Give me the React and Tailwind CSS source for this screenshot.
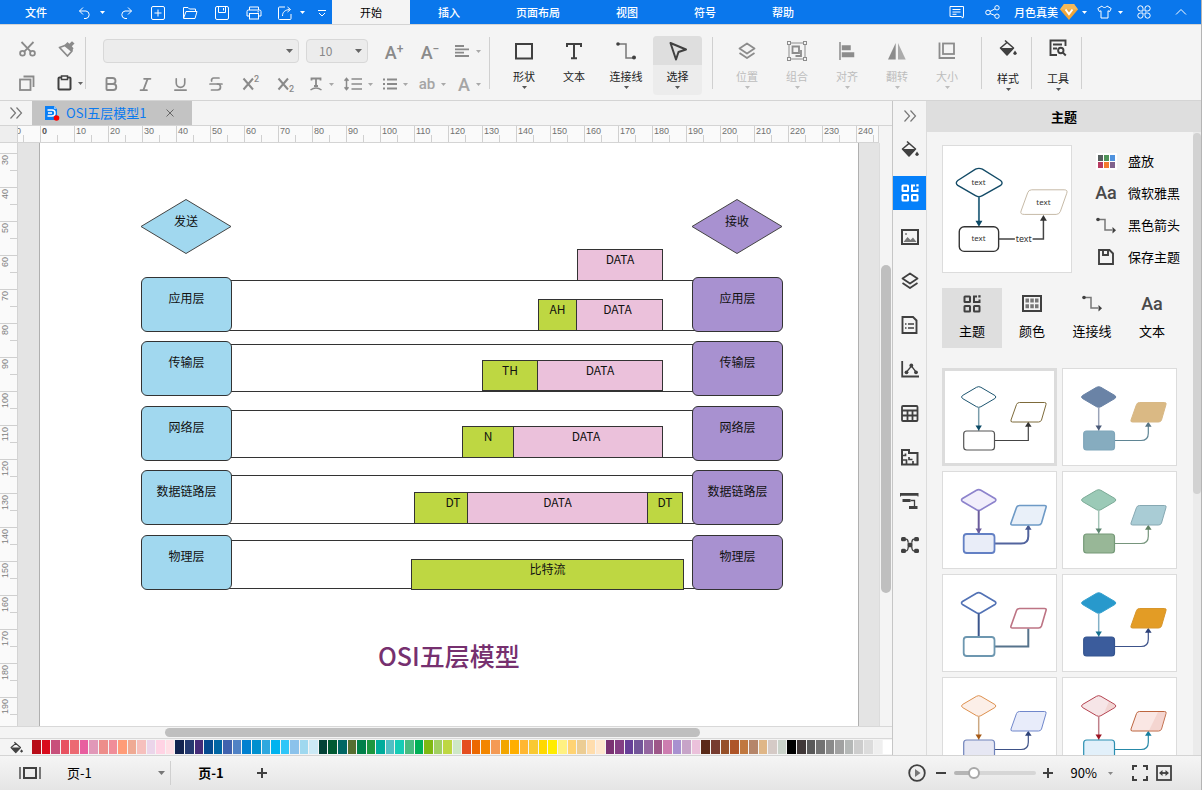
import React from "react";
import { Bold, Italic, Underline, Strikethrough } from "lucide-react";

/* ---------- icon helpers ---------- */

function Svg({ w = 18, h = w, sw = 1.5, className = "", children }) {
  return (
    <svg
      width={w}
      height={h}
      viewBox={`0 0 ${w} ${h}`}
      fill="none"
      stroke="currentColor"
      strokeWidth={sw}
      className={`shrink-0 ${className}`}
      aria-hidden="true"
    >
      {children}
    </svg>
  );
}

function Caret({ className = "" }) {
  return (
    <svg width="5" height="3" viewBox="0 0 5 3" fill="currentColor" className={`shrink-0 ${className}`} aria-hidden="true">
      <path d="M0 0h5L2.5 3z" />
    </svg>
  );
}

function BigCaret({ className = "" }) {
  return (
    <svg width="7" height="4" viewBox="0 0 7 4" fill="currentColor" className={`shrink-0 ${className}`} aria-hidden="true">
      <path d="M0 0h7L3.5 4z" />
    </svg>
  );
}

const DoubleChevron = () => (
  <Svg w={14} h={14} sw={1.2}>
    <path d="M1.5 1.5 6.5 7l-5 5.5M7.5 1.5l5 5.5-5 5.5" />
  </Svg>
);

const UndoIcon = () => (
  <Svg w={14} sw={1}>
    <path d="M5 1.5 1.5 5 5 8.5M1.5 5h6.500a3.800 3.800 0 0 1 0 7.500H6" />
  </Svg>
);
const RedoIcon = () => (
  <Svg w={14} sw={1}>
    <path d="M9 1.5 12.5 5 9 8.5M12.5 5H6a3.800 3.800 0 0 0 0 7.500h2" />
  </Svg>
);
const NewIcon = () => (
  <Svg w={14} sw={1}>
    <rect x="0.5" y="0.5" width="13" height="13" rx="1.5" />
    <path d="M7 3.5v7M3.500 7h7" />
  </Svg>
);
const FolderIcon = () => (
  <Svg w={16} h={14} sw={1}>
    <path d="M1.500 12V1.500h4.500L7.500 3h6v2M1.500 12.500 4 5.500h11l-2 7z" strokeLinejoin="round" />
  </Svg>
);
const SaveIcon = () => (
  <Svg w={14} sw={1}>
    <rect x="0.5" y="0.5" width="13" height="13" rx="1.5" />
    <path d="M3.500.500v6h7v-6M8.500 2v2.500" />
  </Svg>
);
const PrintIcon = () => (
  <Svg w={16} h={14} sw={1}>
    <path d="M3.500 4V1h9v3M3.500 10h-2.500V5.500A1.500 1.500 0 0 1 2.500 4h11A1.500 1.500 0 0 1 15 5.500V10h-2.500" />
    <rect x="3.5" y="7.5" width="9" height="5.5" />
    <path d="M11.500 5.800h1.500" />
  </Svg>
);
const ExportIcon = () => (
  <Svg w={14} sw={1}>
    <path d="M7 1H1.500a1 1 0 0 0-1 1v10.500a1 1 0 0 0 1 1h10.500a1 1 0 0 0 1-1V8M4.500 10c0-4 2.500-6 7-6.500M9.500 1l3 2.500-3 2.500" />
  </Svg>
);
const MoreIcon = () => (
  <Svg w={8} h={8} sw={1}>
    <path d="M0 1.500h8M1 4l3 3 3-3" />
  </Svg>
);
const CommentIcon = () => (
  <Svg w={16} h={14} sw={1}>
    <path d="M1 1.500h13.500v10H14v1.500l-2-1.500H1zM3.500 4.500h8M3.500 7h8M3.500 9.300h4" />
  </Svg>
);
const ShareIcon = () => (
  <Svg w={15} h={14} sw={1}>
    <circle cx="3" cy="7.5" r="2.3" />
    <circle cx="12" cy="2.8" r="2.2" />
    <circle cx="12" cy="11.2" r="2.2" />
    <path d="m5 6.500 5-2.700M5 8.500l5 2" />
  </Svg>
);
const GemIcon = () => (
  <Svg w={18} h={16} sw={2}>
    <path d="M4 0h10l4 5.500L9 16 0 5.500z" fill="#f0a63a" stroke="none" />
    <path d="M4 0h10l4 5.500H0z" fill="#f5b95a" stroke="none" />
    <path d="m5.500 5.500 3.500 4.500 3.500-4.500" stroke="#fff" />
  </Svg>
);
const ShirtIcon = () => (
  <Svg w={15} h={14} sw={1}>
    <path d="M5 1 .8 3.500 2.300 6.500l1.700-.7V13h7V5.800l1.700.7 1.500-3L10 1C9 3 6 3 5 1z" strokeLinejoin="round" />
  </Svg>
);
const CloverIcon = () => (
  <Svg w={14} sw={1}>
    <path d="M6 6H3.500A2.600 2.600 0 1 1 6 3.500zM8 6V3.500A2.600 2.600 0 1 1 10.500 6zM6 8v2.500A2.600 2.600 0 1 1 3.500 8zM8 8h2.500A2.600 2.600 0 1 1 8 10.500z" />
  </Svg>
);

const ScissorsIcon = () => (
  <Svg w={17} h={16} sw={1.8}>
    <circle cx="3.5" cy="12.3" r="2.4" />
    <circle cx="13.5" cy="12.3" r="2.4" />
    <path d="M2.500 1l9 9.300M14.500 1l-9 9.300" />
  </Svg>
);
const BrushIcon = () => (
  <Svg w={17} h={17} sw={1.8}>
    <path d="M1.500 6.500 7 4.500 14 10 9.500 15z" strokeLinejoin="round" />
    <path d="M6.500 4 9.500 1l1.800 1.700L14 .3 16.500 2.500 13.800 5.200l1.700 2L13.500 11z" fill="currentColor" stroke="none" />
  </Svg>
);
const CopyIcon = () => (
  <Svg w={16} h={16} sw={1.8}>
    <rect x="1" y="4.5" width="10.5" height="10.5" />
    <path d="M4.500 1.500h10V12" />
  </Svg>
);
const PasteIcon = () => (
  <Svg w={15} h={16} sw={2}>
    <rect x="1.5" y="2.5" width="12" height="12" rx="1" />
    <rect x="4.5" y="1" width="6" height="3.5" fill="#f4f4f4" strokeWidth="1.5" />
  </Svg>
);
const AlignIcon = () => (
  <Svg w={15} h={12} sw={1.8}>
    <path d="M0 1h9M0 4.300h14M0 7.600h9M0 11h14" />
  </Svg>
);
const PowerIcon = ({ y }) => (
  <Svg w={18} h={18} sw={2}>
    <path d="M1.500 3.500 11 14.500M11 3.500 1.500 14.500" />
    <text x="12" y={y} fill="currentColor" stroke="none" className="font-['Roboto',sans-serif] text-[9px] font-medium">2</text>
  </Svg>
);
const TextEffectIcon = () => (
  <Svg w={14} h={14} sw={1.8}>
    <path d="M2.500 3.500V1.500h9v2M7 1.500V9M5 9h4" />
    <path d="M1.500 13q5.500-4 11 0" strokeWidth="1.5" />
  </Svg>
);
const LineSpacingIcon = () => (
  <Svg w={18} h={14} sw={1.5}>
    <path d="M2.500 1.500v11M.5 3.800 2.500 1.500l2 2.300M.5 10.200l2 2.300 2-2.300M7.500 2H18M7.500 7H18M7.500 12H18" />
  </Svg>
);
const BulletsIcon = () => (
  <Svg w={14} h={12} sw={1.8}>
    <path d="M0 1.500h2M4 1.500h10M0 6h2M4 6h10M0 10.500h2M4 10.500h10" />
  </Svg>
);

const RectIcon = () => (
  <Svg w={20} h={18} sw={2}>
    <rect x="2" y="2" width="16" height="14.5" />
  </Svg>
);
const TIcon = () => (
  <Svg w={18} h={18} sw={2}>
    <path d="M2 5V2h14v3M9 2v14.500M6 16.300h6" />
  </Svg>
);
const ConnectorIcon = () => (
  <Svg w={20} h={18} sw={1.5}>
    <path d="M2 2h8v14h8" className="stroke-[#777]" />
    <circle cx="2" cy="2" r="1.8" fill="currentColor" stroke="none" />
    <circle cx="18" cy="15.5" r="2" fill="currentColor" stroke="none" />
  </Svg>
);
const ArrowConnectorIcon = () => (
  <Svg w={20} h={17} sw={1.5}>
    <path d="M2 2.500h7v10.500h7" className="stroke-[#777]" />
    <circle cx="2" cy="2.5" r="1.8" fill="currentColor" stroke="none" />
    <path d="M16.500 10v6.500l3.500-3.200z" fill="currentColor" stroke="none" />
  </Svg>
);
const PointerIcon = () => (
  <Svg w={20} h={20} sw={2}>
    <path d="M2.500 2 18 8.500l-7.500 2.500L8 18.500z" strokeLinejoin="round" />
  </Svg>
);
const LayersIcon = () => (
  <Svg w={20} h={18} sw={1.8}>
    <path d="m10 1.500 7.500 5-7.500 5-7.500-5zM2.500 11l7.500 5 7.500-5" strokeLinejoin="round" />
  </Svg>
);
const GroupIcon = () => (
  <Svg w={20} h={20} sw={1}>
    <rect x="2" y="2" width="16" height="16" />
    <g fill="#f4f4f4">
      <rect x=".5" y=".5" width="3" height="3" />
      <rect x="16.5" y=".5" width="3" height="3" />
      <rect x=".5" y="16.5" width="3" height="3" />
      <rect x="16.5" y="16.5" width="3" height="3" />
    </g>
    <path d="M5.500 5.500h6.500v6.500H5.500zM14 9v6H8.500" strokeWidth="1.8" />
  </Svg>
);
const AlignLeftIcon = () => (
  <Svg w={16} h={18} sw={1.5}>
    <path d="M1 0v18" />
    <path d="M3.500 4h7.500v3.500H3.500zM3.500 11H14.500v3.500H3.500z" fill="currentColor" />
  </Svg>
);
const FlipIcon = () => (
  <Svg w={20} h={18}>
    <path d="M8.700 1v16.500H1z" fill="currentColor" stroke="none" />
    <path d="M11 1v16.500h7.700z" fill="currentColor" stroke="none" opacity=".7" />
  </Svg>
);
const SizeIcon = () => (
  <Svg w={18} h={18} sw={1.8}>
    <rect x="5" y="1.5" width="11" height="10.5" />
    <path d="M1.500.5v15.500H17" />
  </Svg>
);
const BucketIcon = ({ w = 18 }) => (
  <svg width={w} height={w} viewBox="0 0 18 18" fill="none" stroke="currentColor" strokeWidth="1.6" className="shrink-0" aria-hidden="true">
    <path d="M6 1.500 14.500 9 8 16 1.500 9 8.500 3" strokeLinejoin="round" />
    <path d="M1.500 9h13L8 16z" fill="currentColor" stroke="none" />
    <path d="M16 11.500q3 4 0 4t0-4z" fill="currentColor" stroke="none" />
    <circle cx="16" cy="14.3" r="1.5" fill="currentColor" stroke="none" />
  </svg>
);
const ToolsIcon = () => (
  <Svg w={18} h={18} sw={1.9}>
    <path d="M16.500 7V1.500h-15V16H8M4 5.500h9M4 9.500h4" />
    <circle cx="11.8" cy="11.5" r="2.7" />
    <path d="m13.800 13.500 3 3" />
  </Svg>
);

/* side strip icons */
const ThemeIcon = () => (
  <Svg w={18} h={18} sw={2}>
    <rect x="1.5" y="1.5" width="5.5" height="5.5" rx=".5" />
    <path d="M14 1.500h-3v5.500h5.500V4.500" />
    <path d="M15.300.2h2.300v2.300h-2.300z" fill="currentColor" stroke="none" />
    <rect x="1.5" y="11" width="5.5" height="5.5" rx=".5" />
    <rect x="11" y="11" width="5.5" height="5.5" rx=".5" />
  </Svg>
);
const ImageIcon = () => (
  <Svg w={18} h={16} sw={2}>
    <rect x="1" y="1" width="16" height="14" />
    <path d="m2.500 13 4-5 3 3 2.500-2.500 3.500 4.500z" fill="#777" stroke="none" />
    <circle cx="5" cy="5" r="1" fill="#777" stroke="none" />
  </Svg>
);
const PageIcon = () => (
  <Svg w={17} h={18} sw={1.9}>
    <path d="M1.500 1H12l3.500 3.500V17h-14z" />
    <path d="M4 8h1.500M7 8h6M4 12h1.500M7 12h6" strokeWidth="1.5" />
  </Svg>
);
const ChartIcon = () => (
  <Svg w={18} h={17} sw={1.3}>
    <path d="M1.200 0v15.500H18" strokeWidth="1.8" />
    <path d="m5.500 11 5-6 4.500 6" />
    <g fill="currentColor" stroke="none">
      <circle cx="5.5" cy="11.3" r="1.9" />
      <circle cx="10.3" cy="4.5" r="1.9" />
      <circle cx="15" cy="11.3" r="1.9" />
    </g>
  </Svg>
);
const TableIcon = () => (
  <Svg w={18} h={17} sw={1.8}>
    <rect x="1" y="1" width="15.5" height="15" rx="1" />
    <path d="M1 5.500h15.500M1 10.500h15.500M6.500 5.500V16M11.500 5.500V16" />
  </Svg>
);
const PlanIcon = () => (
  <Svg w={18} h={17} sw={2}>
    <path d="M1 1h7v3h8.500v11.500H1z" />
    <path d="M1 6.500h3.500v-2M1 11h4.500v4M8 8v2.500h3.500M12 15.500V12" strokeWidth="1.7" />
  </Svg>
);
const GanttIcon = () => (
  <Svg w={19} h={16} sw={1.3}>
    <path d="M0 0h18.500v3.500h-1V2.800H1v.7H0zM2.500 6h8v3h-8zM9 13h8.500v3H9z" fill="currentColor" stroke="none" />
    <path d="M10.500 7.500h4V13" />
  </Svg>
);
const MindIcon = () => (
  <Svg w={18} h={16} sw={1.3}>
    <g fill="currentColor" stroke="none">
      <rect x="0" y="0" width="5" height="4.3" rx="1.5" />
      <rect x="13" y="0" width="5" height="4.3" rx="1.5" />
      <rect x="0" y="11.7" width="5" height="4.3" rx="1.5" />
      <rect x="13" y="11.7" width="5" height="4.3" rx="1.5" />
      <rect x="6.5" y="5.8" width="5" height="4.4" rx="1" />
    </g>
    <path d="M5 2.200q2 0 2.200 3.500M13 2.200q-2 0-2.200 3.500M5 13.800q2 0 2.200-3.800M13 13.800q-2 0-2.200-3.800" />
  </Svg>
);
const PaletteGridIcon = () => (
  <Svg w={20} h={17} sw={2}>
    <rect x="1" y="1" width="18" height="15" />
    <path
      d="M3.500 3.500h3.500v4H3.500zM8.300 3.500h3.500v4H8.300zM13 3.500h3.500v4H13zM3.500 9.200h3.500v4H3.500zM8.300 9.200h3.500v4H8.300zM13 9.200h3.500v4H13z"
      fill="#777"
      stroke="none"
    />
  </Svg>
);
const DiskIcon = () => (
  <Svg w={16} h={16} sw={1.9}>
    <path d="M1 1h10.500L15 4.500V15H1zM5 1v5h5V1" />
  </Svg>
);
const SixColorsIcon = () => (
  <svg width="21" height="17" viewBox="0 0 21 17" className="shrink-0" aria-hidden="true">
    <path d="M0 0h21v17H0z" fill="#fff" />
    <path d="M2 2h5v6H2z" fill="#555e5e" />
    <path d="M8 2h5v6H8z" fill="#4f9358" />
    <path d="M14 2h5v6h-5z" fill="#4f92de" />
    <path d="M2 9h5v6H2z" fill="#b73b62" />
    <path d="M8 9h5v6H8z" fill="#f47b2e" />
    <path d="M14 9h5v6h-5z" fill="#80628d" />
  </svg>
);
const AaIcon = () => <span className="font-['Roboto',sans-serif] text-[18px] leading-5 font-medium text-[#4a4a4a]">Aa</span>;

/* ---------- top menu bar ---------- */

function QuickButton({ label, width = "w-8", caret, children }) {
  return (
    <button aria-label={label} className={`flex h-full items-center justify-center gap-2 pt-px ${width}`}>
      {children}
      {caret && <Caret />}
    </button>
  );
}

function MenuBar() {
  return (
    <header className="flex h-6 shrink-0 items-stretch bg-[#0a77ec] text-[11px] font-medium text-white">
      <button className="w-18">文件</button>
      <QuickButton label="撤销" width="w-[38px]" caret><UndoIcon /></QuickButton>
      <QuickButton label="恢复"><RedoIcon /></QuickButton>
      <QuickButton label="新建"><NewIcon /></QuickButton>
      <QuickButton label="打开"><FolderIcon /></QuickButton>
      <QuickButton label="保存"><SaveIcon /></QuickButton>
      <QuickButton label="打印"><PrintIcon /></QuickButton>
      <QuickButton label="导出" width="w-[42px]" caret><ExportIcon /></QuickButton>
      <QuickButton label="更多" width="w-5"><MoreIcon /></QuickButton>
      <nav className="flex">
        <button className="bg-[#f4f4f4] px-7 font-normal text-black">开始</button>
        {["插入", "页面布局", "视图", "符号", "帮助"].map((t) => (
          <button key={t} className="px-7">{t}</button>
        ))}
      </nav>
      <div className="ml-auto flex items-center pr-[14px]">
        <button aria-label="评论" className="mr-5"><CommentIcon /></button>
        <button aria-label="分享" className="mr-3.5"><ShareIcon /></button>
        <button className="mr-2.5 flex items-center gap-0.5">
          月色真美
          <GemIcon />
          <Caret className="ml-0.5" />
        </button>
        <button aria-label="皮肤" className="mr-3.5 flex items-center gap-1.5"><ShirtIcon /><Caret /></button>
        <button aria-label="应用" className="mr-6"><CloverIcon /></button>
        <button aria-label="收起">
          <Svg w={12} h={8} sw={1}><path d="m1 6.500 5-5 5 5" /></Svg>
        </button>
      </div>
    </header>
  );
}

/* ---------- ribbon ---------- */

const Sep = () => <div className="mt-3 h-[52px] w-px shrink-0 bg-[#d0d0d0]" />;

function SmallTool({ label, width = "w-[35px]", caret, children }) {
  return (
    <button aria-label={label} className={`flex h-6 items-center justify-center gap-1.5 ${width}`}>
      {children}
      {caret && <Caret className="text-[#a8a8a8]" />}
    </button>
  );
}

function BigTool({ label, width = "w-[50px]", caret = true, tall, disabled, active, children }) {
  return (
    <button
      disabled={disabled}
      className={`flex flex-col items-center rounded-sm ${tall ? "mt-2 h-16 gap-[5px] pl-[3px]" : "mt-[11px] h-[59px]"} ${width} ${
        active ? "bg-[#ececec]" : ""
      } ${disabled ? "text-[#bdbdbd]" : "text-[#222]"}`}
    >
      <span
        className={`flex h-[29px] w-full items-center justify-center rounded-t-sm ${active ? "bg-[#dedede]" : ""} ${
          disabled ? "text-[#8c8c8c]" : "text-[#404040]"
        }`}
      >
        {children}
      </span>
      <span className="flex flex-col items-center">
        <span className="h-5 text-[11px] leading-[22px]">{label}</span>
        {caret && <Caret className={disabled ? "mt-px" : "mt-px text-[#555]"} />}
      </span>
    </button>
  );
}

function Combo({ label, value, width }) {
  return (
    <div className={`grid h-6 ${width}`}>
      <select
        aria-label={label}
        className="appearance-none rounded-sm border border-[#d8d8d8] bg-[#ececec] pl-3 text-[12px] text-[#888] outline-none [grid-area:1/1]"
        defaultValue={value}
      >
        <option>{value}</option>
      </select>
      <BigCaret className="pointer-events-none mr-1.5 self-center justify-self-end text-[#666] [grid-area:1/1]" />
    </div>
  );
}

function FontStep({ label, sign }) {
  return (
    <button aria-label={label} className="flex h-6 w-9 items-start justify-center pt-0.5 font-['Roboto',sans-serif] text-[18px] leading-6 font-medium">
      A<span className="text-[12px] leading-4">{sign}</span>
    </button>
  );
}

function Ribbon() {
  return (
    <div className="flex h-[77px] shrink-0 border-y border-[#d4d4d4] bg-[#f4f4f4] text-[#8a8a8a]">
      <div className="grid grid-cols-[40px_38px] grid-rows-[34px_34px] items-center justify-items-center pt-[7px] pl-[7px]">
        <button aria-label="剪切"><ScissorsIcon /></button>
        <button aria-label="格式刷"><BrushIcon /></button>
        <button aria-label="复制"><CopyIcon /></button>
        <button aria-label="粘贴" className="flex items-center gap-1.5 pl-2 text-[#404040]"><PasteIcon /><Caret className="text-[#666]" /></button>
      </div>
      <Sep />
      <div className="flex flex-col gap-[9px] pt-[14px]">
        <div className="flex h-6 items-center pl-[17px]">
          <Combo label="字体" value="" width="w-[196px]" />
          <div className="w-[7px]" />
          <Combo label="字号" value="10" width="w-[62px]" />
          <div className="w-2" />
          <FontStep label="增大字号" sign="+" />
          <FontStep label="减小字号" sign="−" />
          <SmallTool label="段落对齐" width="w-10" caret><AlignIcon /></SmallTool>
        </div>
        <div className="flex h-6 items-center pl-[7px]">
          <SmallTool label="加粗"><Bold size={18} strokeWidth={2.5} /></SmallTool>
          <SmallTool label="斜体"><Italic size={17} strokeWidth={2.5} /></SmallTool>
          <SmallTool label="下划线"><Underline size={17} strokeWidth={2.3} /></SmallTool>
          <SmallTool label="删除线"><Strikethrough size={18} strokeWidth={2.3} /></SmallTool>
          <SmallTool label="上标"><PowerIcon y={7} /></SmallTool>
          <SmallTool label="下标"><PowerIcon y={17} /></SmallTool>
          <SmallTool label="文字效果" width="w-[37px]" caret><TextEffectIcon /></SmallTool>
          <SmallTool label="行距" width="w-[37px]" caret><LineSpacingIcon /></SmallTool>
          <SmallTool label="项目符号" width="w-[37px]" caret><BulletsIcon /></SmallTool>
          <SmallTool label="字符底纹" width="w-[37px]" caret>
            <span className="font-['Roboto',sans-serif] text-[15px] font-medium text-[#a5a5a5]">ab</span>
          </SmallTool>
          <SmallTool label="字体颜色" width="w-[37px]" caret>
            <span className="font-['Roboto',sans-serif] text-[18px] font-medium text-[#a5a5a5]">A</span>
          </SmallTool>
        </div>
      </div>
      <div className="w-px" />
      <Sep />
      <div className="flex pr-[10px] pl-[9px]">
        <BigTool label="形状"><RectIcon /></BigTool>
        <BigTool label="文本" caret={false}><TIcon /></BigTool>
        <BigTool label="连接线" width="w-[54px]"><ConnectorIcon /></BigTool>
        <BigTool label="选择" width="w-[49px]" active><PointerIcon /></BigTool>
      </div>
      <Sep />
      <div className="flex px-[9px]">
        <BigTool label="位置" disabled><LayersIcon /></BigTool>
        <BigTool label="组合" disabled><GroupIcon /></BigTool>
        <BigTool label="对齐" disabled><AlignLeftIcon /></BigTool>
        <BigTool label="翻转" disabled><FlipIcon /></BigTool>
        <BigTool label="大小" disabled><SizeIcon /></BigTool>
      </div>
      <Sep />
      <BigTool label="样式" width="w-[49px]" tall><BucketIcon /></BigTool>
      <Sep />
      <BigTool label="工具" width="w-[49px]" tall><ToolsIcon /></BigTool>
      <Sep />
    </div>
  );
}

/* ---------- document area ---------- */

function DocTabs() {
  return (
    <div className="flex h-[25px] shrink-0 border-b border-[#d4d4d4]">
      <button aria-label="展开" className="flex w-8 items-center justify-center text-[#777]"><DoubleChevron /></button>
      <div className="flex w-40 items-center bg-[#c3c3c3] pl-3">
        <svg width="16" height="16" viewBox="0 0 16 16" className="shrink-0" aria-hidden="true">
          <path d="M1 1h9l3 3v11H1z" fill="#0a7ff5" />
          <path d="M10 1l3 3h-3z" fill="#8ec4fb" />
          <path d="M3.500 5h4.500a2.800 2.800 0 0 1 0 6H3.500M4 8h4" stroke="#fff" strokeWidth="1.5" fill="none" />
          <circle cx="12.5" cy="13" r="2.8" fill="#f00" />
        </svg>
        <span className="ml-1.5 text-[13px] text-[#0a7af0]">OSI五层模型1</span>
        <button aria-label="关闭" className="ml-5 text-[#666]">
          <Svg w={8} h={8} sw={1}><path d="M.5.500l7 7M7.500.500l-7 7" /></Svg>
        </button>
      </div>
    </div>
  );
}

const hMarks = Array.from({ length: 26 }, (_, i) => i * 10 - 10);
const vMarks = Array.from({ length: 17 }, (_, i) => 30 + i * 10);

function HorizontalRuler() {
  return (
    <div className="mr-[13px] flex h-[17px] shrink-0 overflow-hidden border-r border-b border-[#d4d4d4] bg-[#fafafa]">
      <div className="relative z-10 w-[18px] shrink-0 border-r border-[#d4d4d4] bg-[#eee]" />
      <div className="-ml-3 flex">
        {hMarks.map((m) => (
          <div key={m} className="flex w-[34px] shrink-0 items-end">
            <div
              className={`h-full w-[17px] border-l border-[#d0d0d0] pl-px font-['Liberation_Sans',sans-serif] text-[9px] leading-[11px] whitespace-nowrap ${
                m === 0 ? "font-bold text-[#555]" : "text-[#707070]"
              }`}
            >
              {m}
            </div>
            <div className="h-[7px] w-[17px] border-l border-[#d0d0d0]" />
          </div>
        ))}
      </div>
    </div>
  );
}

function VerticalRuler() {
  return (
    <div className="w-[18px] shrink-0 overflow-hidden border-r border-[#d4d4d4] bg-[#fafafa] pt-[10px]">
      {vMarks.map((m) => (
        <div key={m} className="flex h-[34px] flex-col items-end">
          <div className="h-[17px] w-full border-t border-[#d0d0d0] pt-px font-['Liberation_Sans',sans-serif] text-[9px] leading-[11px] whitespace-nowrap text-[#808080]">
            <span className="inline-block rotate-180 [writing-mode:vertical-rl]">{m}</span>
          </div>
          <div className="h-[17px] w-[7px] border-t border-[#d0d0d0]" />
        </div>
      ))}
    </div>
  );
}

const layers = [
  { name: "应用层", top: 134, bandTop: 137, bandH: 51 },
  { name: "传输层", top: 198, bandTop: 201, bandH: 48 },
  { name: "网络层", top: 263, bandTop: 267, bandH: 48 },
  { name: "数据链路层", top: 327, bandTop: 332, bandH: 49 },
  { name: "物理层", top: 392, bandTop: 397, bandH: 49 },
];

const packets = [
  { t: "DATA", x: 537, y: 106, w: 86, h: 32, c: "bg-[#ebc1db]" },
  { t: "AH", x: 498, y: 156, w: 39, h: 32, c: "bg-[#bed742]" },
  { t: "DATA", x: 536, y: 156, w: 87, h: 32, c: "bg-[#ebc1db] pr-1" },
  { t: "TH", x: 442, y: 217, w: 56, h: 31, c: "bg-[#bed742]" },
  { t: "DATA", x: 497, y: 217, w: 126, h: 31, c: "bg-[#ebc1db]" },
  { t: "N", x: 422, y: 283, w: 52, h: 32, c: "bg-[#bed742]" },
  { t: "DATA", x: 473, y: 283, w: 150, h: 32, c: "bg-[#ebc1db] pr-1" },
  { t: "DT", x: 374, y: 349, w: 54, h: 32, c: "bg-[#bed742] pl-6" },
  { t: "DATA", x: 427, y: 349, w: 181, h: 32, c: "bg-[#ebc1db]" },
  { t: "DT", x: 607, y: 349, w: 36, h: 32, c: "bg-[#bed742]" },
  { t: "比特流", x: 371, y: 416, w: 273, h: 31, c: "bg-[#bed742]" },
];

function Diamond({ x, fill, text }) {
  return (
    <div className="absolute grid" style={{ left: x, top: 55 }}>
      <svg width="92" height="57" viewBox="0 0 92 57" className="[grid-area:1/1]" aria-hidden="true">
        <path d="M46 1.500 91 28.500 46 55.500 1 28.500z" fill={fill} stroke="#444" />
      </svg>
      <span className="mt-[13px] text-center leading-5 [grid-area:1/1]">{text}</span>
    </div>
  );
}

function Diagram() {
  return (
    <div className="relative h-full text-[12px] text-[#111]">
      <Diamond x={100} fill="#a1d8ef" text="发送" />
      <Diamond x={651} fill="#a891d0" text="接收" />
      {layers.map((l) => (
        <div key={l.name}>
          <div className="absolute border-y border-[#333]" style={{ left: 146, top: l.bandTop, width: 551, height: l.bandH }} />
          <div className="absolute rounded-md border border-[#333] bg-[#a1d8ef] pt-[10px] text-center leading-5" style={{ left: 101, top: l.top, width: 91, height: 55 }}>
            {l.name}
          </div>
          <div className="absolute rounded-md border border-[#333] bg-[#a891d0] pt-[10px] text-center leading-5" style={{ left: 652, top: l.top, width: 91, height: 55 }}>
            {l.name}
          </div>
        </div>
      ))}
      {packets.map((p) => (
        <div key={p.x + "-" + p.y} className={`absolute border border-[#333] text-center leading-[18px] ${p.c}`} style={{ left: p.x, top: p.y, width: p.w, height: p.h }}>
          {p.t}
        </div>
      ))}
      <h1 className="absolute top-[494px] left-[338px] text-[25px] leading-9 font-medium whitespace-nowrap text-[#76306f]">OSI五层模型</h1>
    </div>
  );
}

const swatches = (
  "b80d18 d90b1c c8507b e85261 ec6a72 e85e9f e198b8 ed8d8a f08d99 ff9c78 efaa94 f6c0bd ebd5ea ffd3e4 ffdfe6 " +
  "13234f 24396f 452c78 054a8f 0066a4 4062ae 5082c5 0080d0 0090cf 2ea8df 00b3ef 2fc6f8 8bc2eb 9fd8ef cce9f5 " +
  "024236 005a32 006663 566e30 00804a 1d973f 00ac9c 52bfc3 16ccb5 48bb80 00b057 80b913 a1d062 bed742 cee7c7 " +
  "e54e20 ec6800 f38600 f49a55 f2a600 ffaf00 ffb732 f9c932 ffd800 ffec00 fff182 ffd373 eccd94 ffddad ffe8cf " +
  "7a3273 843e84 673f98 735599 9566a0 9e5789 cd7db0 a891d0 c7a4c8 ebc1db 5a2a18 773b2f 965029 ae5428 c07840 " +
  "b5856a dfb687 d5cac6 cad3ca 000000 403838 595959 727272 8a8a8a a1a1a1 b5b8b7 cdcdcd dcdcdc efefef ffffff"
).split(" ");

function Palette() {
  return (
    <div className="flex h-[17px] shrink-0 items-center border-t border-[#d8d8d8] text-[#404040]">
      <button aria-label="填充" className="flex w-8 justify-center"><BucketIcon w={13} /></button>
      <div className="flex h-[14px] flex-1 gap-px">
        {swatches.map((c) => (
          <button key={c} aria-label={"#" + c} className="min-w-0 flex-1" style={{ backgroundColor: "#" + c }} />
        ))}
      </div>
    </div>
  );
}

function Workspace() {
  return (
    <main className="flex min-w-0 flex-1 flex-col border-r border-[#c6c6c6]">
      <DocTabs />
      <HorizontalRuler />
      <div className="flex min-h-0 flex-1">
        <VerticalRuler />
        <div className="min-w-0 flex-1 overflow-hidden bg-[#e4e4e4] pr-5 pl-[21px]">
          <div className="h-full border-x border-[#b0b0b0] bg-white"><Diagram /></div>
        </div>
        <div className="flex w-[13px] shrink-0 flex-col items-center border-l border-[#dcdcdc]">
          <div className="grow-122 basis-0" />
          <div className="w-[10px] grow-327 basis-0 rounded-full bg-[#bfbfbf]" />
          <div className="grow-133 basis-0" />
        </div>
      </div>
      <div className="flex h-3 shrink-0 items-center border-t border-[#d8d8d8]">
        <div className="grow-165 basis-0" />
        <div className="h-[9px] grow-535 basis-0 rounded-full bg-[#bfbfbf]" />
        <div className="grow-192 basis-0" />
      </div>
      <Palette />
    </main>
  );
}

/* ---------- right side ---------- */

function SideStrip() {
  const items = [
    ["填充", BucketIcon],
    ["主题", ThemeIcon],
    ["图片", ImageIcon],
    ["图层", LayersIcon],
    ["页面", PageIcon],
    ["图表", ChartIcon],
    ["表格", TableIcon],
    ["平面图", PlanIcon],
    ["甘特图", GanttIcon],
    ["思维导图", MindIcon],
  ];
  return (
    <aside className="flex w-[34px] shrink-0 flex-col border-r border-[#dcdcdc] text-[#404040]">
      <button aria-label="收起面板" className="flex h-[26px] items-center justify-center pt-1 text-[#777]"><DoubleChevron /></button>
      {items.map(([label, I]) => (
        <div key={label} className="py-[5px]">
          <button aria-label={label} className={`flex h-[34px] w-full items-center justify-center ${label === "主题" ? "bg-[#0580fa] text-white" : ""}`}>
            <I />
          </button>
        </div>
      ))}
    </aside>
  );
}

const DIAMOND = "M34.500 19.300q2.200-1.300 4.400 0l14 8.200q2 1.500 0 3l-14 8.200q-2.200 1.300-4.400 0l-14-8.200q-2-1.500 0-3z";
const PARA = "M77.500 34.500h25q2.200 0 1.500 2l-4.500 15.500q-.7 2-3 2h-26q-2.200 0-1.500-2l5.500-15.500q.8-2 3-2z";

function ThemeThumb({ t }) {
  const sw = t.sw || 1;
  return (
    <svg width="113" height="96" viewBox="1 1 113 96" fill="none" className="block" aria-hidden="true">
      <path d={DIAMOND} fill={t.d[0]} stroke={t.d[1]} strokeWidth={sw} />
      <path d="M36.700 39.500V63" stroke={t.down[0]} strokeWidth={t.sw ? 2 : 1.5} />
      {t.down[1] && <path d="M33.500 57.500h6.400l-3.200 5z" fill={t.down[1]} />}
      <path d={t.round ? "M52.700 72.500H79q7.300 0 7.300-7.300V55" : "M52.700 72.500h33.600V54.500"} stroke={t.side} strokeWidth={t.sw ? 2 : 1.2} />
      {!t.noArrow && <path d="M83 58.800h6.600l-3.300-5z" fill={t.head} />}
      <rect x="21.7" y="63" width="30.8" height="19" rx="3" fill={t.r[0]} stroke={t.r[1]} strokeWidth={sw + 0.2} />
      <path d={PARA} fill={t.p[0]} stroke={t.p[1]} strokeWidth={sw} />
      {t.shine && (
        <g fill={t.shine}>
          <path d="M47 24.500 52.700 28q1.500 1 0 2L42 36z" opacity=".35" />
          <path d="M96 35h6.500q2 0 1.500 1.500L99.500 52q-.7 1.500-3 1.500H87z" opacity=".35" />
        </g>
      )}
    </svg>
  );
}

const themes = [
  { d: ["#fff", "#1d5570"], down: ["#7a9dab", "#0c4a66"], r: ["#fff", "#555"], side: "#444", head: "#333", p: ["#fff", "#7d6a3a"] },
  { d: ["#6a83a6", "#6a83a6"], down: ["#9aa3b8", "#4a5a78"], r: ["#86acbf", "#7fa6ba"], side: "#5f8594", head: "#587584", p: ["#dab984", "#d8b885"], round: true },
  { d: ["#f1eefb", "#8d83cc"], down: ["#6a5c9c", "#6a5c9c"], r: ["#e9edf8", "#6380c4"], side: "#52649e", head: "#46578f", p: ["#e9f0f9", "#6e9ac6"], round: true, sw: 1.6 },
  { d: ["#9bcab7", "#7cab97"], down: ["#a4c4b7", "#5d8671"], r: ["#98b797", "#769a78"], side: "#76957c", head: "#5f8163", p: ["#a9ccd5", "#86a8b2"], round: true },
  { d: ["#fff", "#5272b5"], down: ["#3a558c", null], r: ["#fff", "#6d97b0"], side: "#56738c", head: null, noArrow: true, p: ["#fff", "#bd7484"], sw: 1.6 },
  { d: ["#2899cc", "#38a2cf"], down: ["#83b1c7", "#15708f"], r: ["#3b5c9c", "#34548f"], side: "#3c528a", head: "#2c4178", p: ["#e39c25", "#d8962c"], round: true },
  { d: ["#fcefe8", "#de914f"], down: ["#cca882", "#a65a17"], r: ["#e6e7f3", "#7084bb"], side: "#3d5187", head: "#2e4278", p: ["#e8ecfa", "#7087cb"], round: true },
  { d: ["#f6e5e7", "#b54350"], down: ["#c0808a", "#9c1423"], r: ["#e2f0fa", "#2b8fb1"], side: "#2689a8", head: "#177e9f", p: ["#fae7e4", "#bd653f"], round: true, shine: "#e8b4ac" },
];

function ThemePreview() {
  return (
    <svg width="130" height="128" viewBox="0 0 130 128" fill="none" className="shrink-0 border border-[#dcdcdc] bg-white font-['Noto_Sans',sans-serif] text-[8px]" role="img" aria-label="主题预览">
      <path d="M33 23.500q3.500-1.500 7 0L58.500 35q3 2.500 0 5L40 50.500q-3.500 2-7 0L15 40q-3-2.500 0-5z" stroke="#124a66" strokeWidth="1.4" />
      <path d="M36.500 51.500V78" stroke="#3d7189" strokeWidth="2" />
      <path d="M33 76h7l-3.500 6z" fill="#0c4a66" />
      <rect x="16.5" y="82" width="40" height="25" rx="5" stroke="#333" strokeWidth="1.4" />
      <path d="M56.500 94.500H102V75" stroke="#444" strokeWidth="1.5" />
      <path d="M98.500 76h7l-3.500-6z" fill="#333" />
      <path d="M90 44.500h33q4 0 2.700 3.500l-6.500 18.500q-1.200 3-4.200 3H82.500q-4.500 0-3.200-3.500l6.700-18.500q1-3 4-3z" stroke="#c5b9a6" />
      <rect x="73" y="90" width="18" height="9" fill="#fff" />
      <g fill="#333" textAnchor="middle">
        <text x="36" y="39.5">text</text>
        <text x="36" y="97">text</text>
        <text x="102" y="60">text</text>
        <text x="82" y="97.5" className="text-[9px]">text</text>
      </g>
    </svg>
  );
}

function ThemePanel() {
  const options = [
    ["盛放", SixColorsIcon],
    ["微软雅黑", AaIcon],
    ["黑色箭头", ArrowConnectorIcon],
    ["保存主题", DiskIcon],
  ];
  const tabs = [
    ["主题", ThemeIcon],
    ["颜色", PaletteGridIcon],
    ["连接线", ArrowConnectorIcon],
    ["文本", AaIcon],
  ];
  return (
    <aside className="flex w-[274px] shrink-0 flex-col text-[13px] text-black">
      <h2 className="flex h-[31px] shrink-0 items-center justify-center bg-[#dedede] font-bold">主题</h2>
      <div className="flex min-h-0 flex-1">
        <div className="min-w-0 flex-1 overflow-hidden pt-[13px] pl-[15px]">
          <div className="flex">
            <ThemePreview />
            <div className="flex flex-col">
              {options.map(([label, I]) => (
                <button key={label} className="flex h-8 items-center text-left text-[#404040]">
                  <span className="mr-0.5 ml-[14px] flex w-10 justify-center"><I /></span>
                  <span className="text-black">{label}</span>
                </button>
              ))}
            </div>
          </div>
          <div className="mt-[15px] flex" role="tablist">
            {tabs.map(([label, I], i) => (
              <button key={label} role="tab" aria-selected={i === 0} className={`flex h-15 w-[60px] flex-col items-center ${i === 0 ? "bg-[#dedede]" : ""}`}>
                <span className="flex h-[31px] items-center text-[#404040]"><I /></span>
                <span className="leading-6">{label}</span>
              </button>
            ))}
          </div>
          <div className="mt-5 grid grid-cols-[115px_115px] gap-[5px]">
            {themes.map((t, i) => (
              <button key={i} aria-label={"主题 " + (i + 1)} className={`h-[98px] overflow-hidden border border-[#dcdcdc] bg-white ${i === 0 ? "inset-ring-2 inset-ring-[#dcdcdc]" : ""}`}>
                <ThemeThumb t={t} />
              </button>
            ))}
          </div>
        </div>
        <div className="w-2 shrink-0 bg-[#ebebeb] pt-px">
          <div className="h-[58%] rounded-full bg-[#d2d2d2]" />
        </div>
      </div>
    </aside>
  );
}

/* ---------- status bar ---------- */

function StatusBar() {
  return (
    <footer className="flex h-[35px] shrink-0 items-center border-t border-[#d4d4d4] bg-linear-to-b from-[#f5f5f5] to-[#e5e5e5] text-[13px] text-black">
      <button aria-label="页面视图" className="flex w-15 justify-center text-[#404040]">
        <Svg w={22} h={12} sw={2}>
          <rect x="5" y="1" width="12" height="10" />
          <path d="M1 0v12M21 0v12" className="stroke-[#777]" />
        </Svg>
      </button>
      <div className="grid h-6 w-[110px] items-center">
        <select aria-label="页面" className="h-6 appearance-none bg-transparent pl-[7px] outline-none [grid-area:1/1]" defaultValue="页-1">
          <option>页-1</option>
        </select>
        <BigCaret className="pointer-events-none mr-[5px] justify-self-end text-[#777] [grid-area:1/1]" />
      </div>
      <div className="h-6 w-px bg-[#d0d0d0]" />
      <button className="w-20 font-bold">页-1</button>
      <button aria-label="添加页面" className="ml-1.5 text-[#404040]">
        <Svg w={10} sw={2}><path d="M5 0v10M0 5h10" /></Svg>
      </button>
      <div className="ml-auto flex items-center pr-[29px] text-[#404040]">
        <button aria-label="播放" className="mr-2.5">
          <Svg w={18} sw={1.8}>
            <circle cx="9" cy="9" r="7.8" />
            <path d="M7 5v8l5.500-4z" fill="#777" stroke="none" />
          </Svg>
        </button>
        <button aria-label="缩小" className="mr-2"><Svg w={10} h={12} sw={2}><path d="M0 6h10" /></Svg></button>
        <input
          type="range"
          aria-label="缩放"
          min="0"
          max="100"
          defaultValue="20"
          className="h-1 w-[82px] appearance-none rounded-full bg-linear-to-r from-[#b5b5b5] from-25% to-[#d6d6d6] to-25% [&::-webkit-slider-thumb]:size-3 [&::-webkit-slider-thumb]:appearance-none [&::-webkit-slider-thumb]:rounded-full [&::-webkit-slider-thumb]:border-2 [&::-webkit-slider-thumb]:border-[#a8a8a8] [&::-webkit-slider-thumb]:bg-white"
        />
        <button aria-label="放大" className="ml-[7px]"><Svg w={10} h={12} sw={2}><path d="M0 6h10M5 1v10" /></Svg></button>
        <button className="ml-[18px] flex items-center gap-[11px] text-black">90%<Caret className="text-[#888]" /></button>
        <button aria-label="全屏" className="ml-[19px]">
          <Svg w={16} sw={2}><path d="M1 5V1h4M11 1h4v4M15 11v4h-4M5 15H1v-4" /></Svg>
        </button>
        <button aria-label="适应宽度" className="ml-2">
          <Svg w={16} sw={1.8}>
            <rect x="1" y="1" width="14" height="14" />
            <path d="M4.500 8h7" />
            <path d="M6.500 5v6L3 8zM9.500 5v6L13 8z" fill="currentColor" stroke="none" />
          </Svg>
        </button>
      </div>
    </footer>
  );
}

export default function App() {
  return (
    <div className="flex h-screen flex-col overflow-hidden border-r border-[#b4b4b4] bg-[#f4f4f4] font-['Noto_Sans_CJK_SC',sans-serif]">
      <MenuBar />
      <Ribbon />
      <div className="flex min-h-0 flex-1">
        <Workspace />
        <SideStrip />
        <ThemePanel />
      </div>
      <StatusBar />
    </div>
  );
}
